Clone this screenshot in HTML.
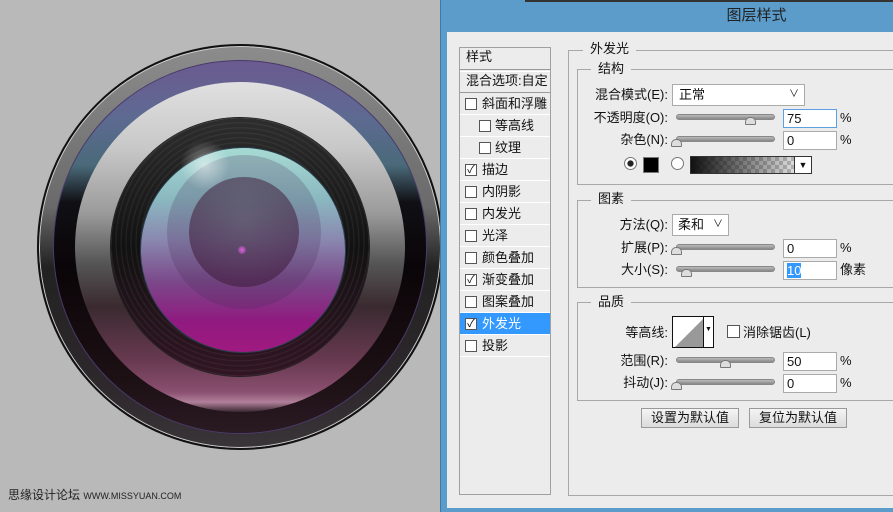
<!DOCTYPE html>
<html><head><meta charset="utf-8"><style>
*{margin:0;padding:0;box-sizing:border-box}
body{width:893px;height:512px;overflow:hidden;background:#b9b9b9;position:relative;font-family:"Liberation Sans","Noto Sans CJK SC",sans-serif;font-size:13px;color:#111}
.a{position:absolute}
.c{position:absolute;border-radius:50%}
.row{position:absolute;left:460px;width:90px;height:22px;border-bottom:1px solid #fff;line-height:21px;padding-left:22px}
.cb{position:absolute;left:5px;top:5px;width:12px;height:12px;border:1px solid #555;background:#fff;font-size:11px;line-height:10px;text-align:center}
.lbl{position:absolute;width:200px;text-align:right;left:468px;line-height:18px}
.sl{position:absolute;left:676px;width:99px;height:6px;border-radius:3px;background:linear-gradient(#bbb,#888);border:1px solid #888}
.th{position:absolute;width:11px;height:8px;background:#ddd;border:1px solid #777;border-radius:5px 5px 1px 1px}
.in{position:absolute;left:783px;width:54px;height:19px;background:#fff;border:1px solid #aaa;padding-left:3px;line-height:17px}
.pc{position:absolute;left:840px;line-height:18px}
.box{position:absolute;border:1px solid #a8a8a8}
.gt{position:absolute;background:#ececec;padding:0 7px;line-height:16px}
.btn{position:absolute;top:408px;width:98px;height:20px;border:1px solid #999;background:linear-gradient(#f4f4f4,#dcdcdc);text-align:center;line-height:18px}
</style></head><body>

<!-- lens -->
<div class="c" style="left:33px;top:40px;width:414px;height:414px;background:radial-gradient(circle,rgba(0,0,0,0.18) 45%,rgba(0,0,0,0) 70%)"></div>
<div class="c" style="left:37px;top:44px;width:406px;height:406px;border:2px solid #111;box-shadow:inset 0 0 0 1px #ccc;background:linear-gradient(#8c8c8c,#6a6a6a 40%,#222 55%,#2e282c 85%,#3a3538)"></div>
<div class="c" style="left:53px;top:60px;width:374px;height:374px;border:1px solid #4a3a6a;background:linear-gradient(#6b5a90 0%,#5e6a92 15%,#4a6a7a 28%,#101014 38%,#0a0508 55%,#1c1014 85%,#2a1a22 100%)"></div>
<div class="c" style="left:75px;top:82px;width:330px;height:330px;background:linear-gradient(#e0e0e0 0%,#c8c8c8 20%,#9a9a9a 40%,#555 55%,#3a2a30 68%,#6a3a52 85%,#8a5070 94%,#b0809a 97%,#3a2830 100%)"></div>
<div class="c" style="left:111px;top:118px;width:258px;height:258px;background:repeating-radial-gradient(circle at 50% 48%,#161616 0 3px,#2c2c2c 4px,#161616 5px);box-shadow:0 0 0 1px #222"></div>
<div class="c" style="left:111px;top:118px;width:258px;height:258px;background:linear-gradient(rgba(90,90,90,.35),rgba(0,0,0,.2) 50%,rgba(100,20,60,.35))"></div>
<div class="c" style="left:140px;top:147px;width:206px;height:206px;border:1px solid #2a4050;background:linear-gradient(#a8dad4 0%,#8ab8c0 25%,#8a88b0 45%,#7a4a8a 65%,#901a80 85%,#a01a80 100%)"></div>
<div class="c" style="left:167px;top:155px;width:154px;height:154px;background:rgba(70,40,80,.22)"></div>
<div class="c" style="left:189px;top:177px;width:110px;height:110px;background:radial-gradient(circle at 50% 40%,rgba(80,60,80,.55),rgba(60,20,55,.6))"></div>
<div class="c" style="left:180px;top:140px;width:50px;height:50px;background:radial-gradient(circle,rgba(255,255,255,.5),rgba(255,255,255,0) 70%)"></div>
<div class="c" style="left:238px;top:246px;width:8px;height:8px;background:radial-gradient(circle,#e060e0,rgba(200,50,200,0))"></div>
<div class="a" style="left:8px;top:486px;font-size:12px;color:#222">思缘设计论坛 <span style="font-size:9px;letter-spacing:0">WWW.MISSYUAN.COM</span></div>

<!-- dialog -->
<div class="a" style="left:440px;top:0;width:453px;height:512px;background:#5b9ccb;border-left:1px solid #3d7aa8"></div>
<div class="a" style="left:525px;top:0;width:368px;height:2px;background:#333"></div>
<div class="a" style="left:440px;top:6px;width:453px;text-align:center;padding-left:180px;font-size:15px;color:#222;line-height:20px">图层样式</div>
<div class="a" style="left:447px;top:32px;width:446px;height:476px;background:#ececec"></div>

<div class="a" style="left:459px;top:47px;width:92px;height:448px;border:1px solid #a0a0a0"></div>
<div class="a" style="left:466px;top:47px;line-height:20px">样式</div>
<div class="a" style="left:460px;top:69px;width:90px;height:3px;border-top:1px solid #999;border-bottom:1px solid #fff"></div>
<div class="a" style="left:466px;top:71px;line-height:20px">混合选项:自定</div>
<div class="a" style="left:460px;top:92px;width:90px;border-top:1px solid #999"></div>
<div class="row" style="top:93px"><span class="cb"></span>斜面和浮雕</div>
<div class="row" style="top:115px;padding-left:35px"><span class="cb" style="left:19px"></span>等高线</div>
<div class="row" style="top:137px;padding-left:35px"><span class="cb" style="left:19px"></span>纹理</div>
<div class="row" style="top:159px"><span class="cb">✓</span>描边</div>
<div class="row" style="top:181px"><span class="cb"></span>内阴影</div>
<div class="row" style="top:203px"><span class="cb"></span>内发光</div>
<div class="row" style="top:225px"><span class="cb"></span>光泽</div>
<div class="row" style="top:247px"><span class="cb"></span>颜色叠加</div>
<div class="row" style="top:269px"><span class="cb">✓</span>渐变叠加</div>
<div class="row" style="top:291px"><span class="cb"></span>图案叠加</div>
<div class="row" style="top:313px;background:#3399ff;color:#fff"><span class="cb" style="color:#000">✓</span>外发光</div>
<div class="row" style="top:335px"><span class="cb"></span>投影</div>

<div class="box" style="left:568px;top:50px;width:330px;height:446px;border-right:none"></div>
<div class="gt" style="left:583px;top:41px">外发光</div>
<div class="box" style="left:577px;top:69px;width:320px;height:116px;border-right:none"></div>
<div class="gt" style="left:591px;top:61px">结构</div>
<div class="box" style="left:577px;top:200px;width:320px;height:88px;border-right:none"></div>
<div class="gt" style="left:591px;top:191px">图素</div>
<div class="box" style="left:577px;top:302px;width:320px;height:99px;border-right:none"></div>
<div class="gt" style="left:591px;top:294px">品质</div>

<div class="lbl" style="top:86px">混合模式(E):</div>
<div class="a" style="left:672px;top:84px;width:133px;height:22px;background:#fff;border:1px solid #aaa;padding-left:6px;line-height:20px">正常<span style="position:absolute;right:5px;font-size:10px">∨</span></div>
<div class="lbl" style="top:109px">不透明度(O):</div>
<div class="sl" style="top:114px"></div><div class="th" style="left:745px;top:117px"></div>
<div class="in" style="top:109px;border-color:#5ba0e0">75</div><div class="pc" style="top:109px">%</div>
<div class="lbl" style="top:131px">杂色(N):</div>
<div class="sl" style="top:136px"></div><div class="th" style="left:671px;top:139px"></div>
<div class="in" style="top:131px">0</div><div class="pc" style="top:131px">%</div>
<div class="c" style="left:624px;top:157px;width:13px;height:13px;border:1px solid #777;background:radial-gradient(circle,#222 35%,#fff 45%)"></div>
<div class="a" style="left:643px;top:157px;width:16px;height:16px;background:#000;border:1px solid #777"></div>
<div class="c" style="left:671px;top:157px;width:13px;height:13px;border:1px solid #777;background:#fff"></div>
<div class="a" style="left:690px;top:156px;width:122px;height:18px;border:1px solid #333;background:linear-gradient(90deg,#111,rgba(0,0,0,0)),repeating-conic-gradient(#ccc 0 25%,#fff 0 50%) 0 0/8px 8px"></div>
<div class="a" style="left:794px;top:157px;width:17px;height:16px;background:#fff;border-left:1px solid #333;font-size:9px;text-align:center;line-height:16px">▼</div>

<div class="lbl" style="top:216px">方法(Q):</div>
<div class="a" style="left:672px;top:214px;width:57px;height:22px;background:#fff;border:1px solid #aaa;padding-left:5px;line-height:20px">柔和<span style="position:absolute;right:5px;font-size:10px">∨</span></div>
<div class="lbl" style="top:239px">扩展(P):</div>
<div class="sl" style="top:244px"></div><div class="th" style="left:671px;top:247px"></div>
<div class="in" style="top:239px">0</div><div class="pc" style="top:239px">%</div>
<div class="lbl" style="top:261px">大小(S):</div>
<div class="sl" style="top:266px"></div><div class="th" style="left:681px;top:269px"></div>
<div class="in" style="top:261px"><span style="background:#3399ff;color:#fff">10</span></div><div class="pc" style="top:261px">像素</div>

<div class="lbl" style="top:324px">等高线:</div>
<div class="a" style="left:672px;top:316px;width:42px;height:32px;border:1px solid #111;background:#fff"></div>
<svg class="a" style="left:673px;top:317px" width="30" height="30"><polygon points="2,30 30,2 30,30" fill="#999"/></svg>
<div class="a" style="left:703px;top:317px;width:10px;height:30px;border-left:1px solid #111;background:#fff;font-size:7px;text-align:center;line-height:26px">▼</div>
<div class="a" style="left:727px;top:325px;width:13px;height:13px;border:1px solid #555;background:#fff"></div>
<div class="a" style="left:743px;top:324px;line-height:18px">消除锯齿(L)</div>
<div class="lbl" style="top:352px">范围(R):</div>
<div class="sl" style="top:357px"></div><div class="th" style="left:720px;top:360px"></div>
<div class="in" style="top:352px">50</div><div class="pc" style="top:352px">%</div>
<div class="lbl" style="top:374px">抖动(J):</div>
<div class="sl" style="top:379px"></div><div class="th" style="left:671px;top:382px"></div>
<div class="in" style="top:374px">0</div><div class="pc" style="top:374px">%</div>

<div class="btn" style="left:641px">设置为默认值</div>
<div class="btn" style="left:749px">复位为默认值</div>
</body></html>
